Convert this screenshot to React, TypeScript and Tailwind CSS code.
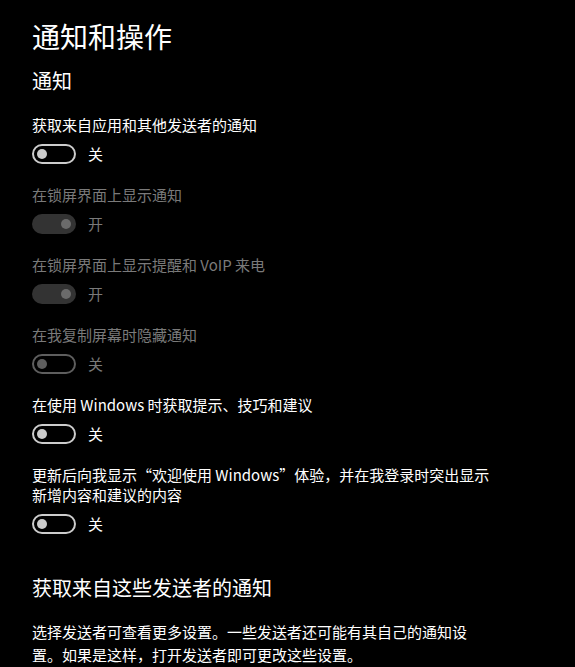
const FONT = "font-['Microsoft_YaHei','Noto_Sans_CJK_SC','Noto_Sans',sans-serif]";

type Row = {
  label: string[];
  on: boolean;
  disabled?: boolean;
};

const ROWS: Row[] = [
  { label: ["获取来自应用和其他发送者的通知"], on: false },
  { label: ["在锁屏界面上显示通知"], on: true, disabled: true },
  { label: ["在锁屏界面上显示提醒和 VoIP 来电"], on: true, disabled: true },
  { label: ["在我复制屏幕时隐藏通知"], on: false, disabled: true },
  { label: ["在使用 Windows 时获取提示、技巧和建议"], on: false },
  {
    label: ["更新后向我显示“欢迎使用 Windows”体验，并在我登录时突出显示", "新增内容和建议的内容"],
    on: false,
  },
];

function Toggle({ on, disabled }: { on: boolean; disabled?: boolean }) {
  if (on) {
    return (
      <span className="relative w-[44px] h-[20px] rounded-full bg-[#333333] shrink-0">
        <span className="absolute top-[5px] right-[5px] w-[10px] h-[10px] rounded-full bg-[#6b6b6b]" />
      </span>
    );
  }
  return (
    <span
      className={`relative w-[44px] h-[20px] rounded-full border-2 shrink-0 ${
        disabled ? "border-[#5e5e5e]" : "border-[#cccccc]"
      }`}
    >
      <span
        className={`absolute top-[3px] left-[3px] w-[10px] h-[10px] rounded-full ${
          disabled ? "bg-[#5e5e5e]" : "bg-[#cccccc]"
        }`}
      />
    </span>
  );
}

export default function App() {
  return (
    <main className={`min-h-[667px] w-[575px] bg-black text-white pl-[32px] pt-[16px] overflow-hidden ${FONT}`}>
      <h1 className="text-[28px] leading-[40px]">通知和操作</h1>
      <h2 className="text-[20px] leading-[28px] mt-[11px]">通知</h2>

      <div className="mt-[20px] flex flex-col gap-[21px]">
        {ROWS.map((r) => (
          <div key={r.label[0]} className="flex flex-col gap-[9px]">
            <p
              className={`text-[15px] leading-[20px] whitespace-nowrap ${
                r.disabled ? "text-[#7a7a7a]" : "text-white"
              }`}
            >
              {r.label.map((line, i) => (
                <span key={i} className="block">
                  {line}
                </span>
              ))}
            </p>
            <div className="flex items-center gap-[12px]">
              <Toggle on={r.on} disabled={r.disabled} />
              <span
                className={`text-[15px] leading-[20px] ${
                  r.disabled ? "text-[#7a7a7a]" : "text-white"
                }`}
              >
                {r.on ? "开" : "关"}
              </span>
            </div>
          </div>
        ))}
      </div>

      <h2 className="text-[20px] leading-[28px] mt-[40px]">获取来自这些发送者的通知</h2>
      <p className="text-[15px] leading-[23px] mt-[18px] max-w-[446px]">
        选择发送者可查看更多设置。一些发送者还可能有其自己的通知设置。如果是这样，打开发送者即可更改这些设置。
      </p>
    </main>
  );
}
